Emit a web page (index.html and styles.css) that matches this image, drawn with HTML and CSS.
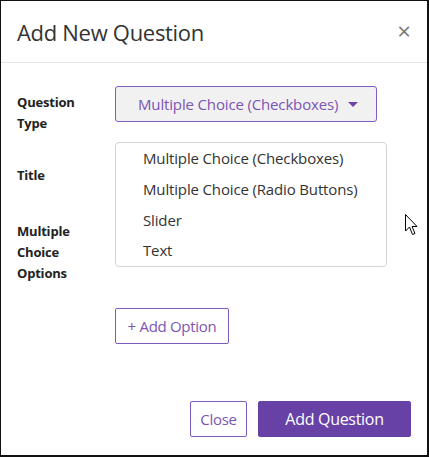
FILE: index.html
```html
<!DOCTYPE html>
<html>
<head>
<meta charset="utf-8">
<link rel="stylesheet" href="styles.css">
</head>
<body>
<div class="modal">
  <div class="modal-header">
    <h1 class="modal-title">Add New Question</h1>
    <span class="close-x">×</span>
  </div>
  <div class="modal-body">
    <div class="row row-type">
      <div class="label">Question<br>Type</div>
      <div class="control select-wrap">
        <div class="select">Multiple Choice (Checkboxes)<span class="caret"></span></div>
        <ul class="menu">
          <li>Multiple Choice (Checkboxes)</li>
          <li>Multiple Choice (Radio Buttons)</li>
          <li>Slider</li>
          <li>Text</li>
        </ul>
      </div>
    </div>
    <div class="row row-title">
      <div class="label label-title">Title</div>
      <div class="control"><div class="input"></div></div>
    </div>
    <div class="row">
      <div class="label label-opts">Multiple<br>Choice<br>Options</div>
      <div class="control">
        <div class="options-list"></div>
        <button class="btn btn-outline">+ Add Option</button>
      </div>
    </div>
  </div>
  <div class="modal-footer">
    <button class="btn btn-outline">Close</button>
    <button class="btn btn-primary">Add Question</button>
  </div>
  <svg class="cursor" width="13" height="22" viewBox="0 0 13 22"><path d="M0.5 0.5 L0.5 17 L4.5 13 L7.5 20.5 L10 19.5 L7 12.5 L12 12.5 Z" fill="#fff" stroke="#000" stroke-width="1"/></svg>
</div>
</body>
</html>
```
FILE: styles.css
```css
* { box-sizing: border-box; }
html, body { margin: 0; padding: 0; background: #fff; }
body { font-family: "Open Sans", "Noto Sans", sans-serif; color: #333; }
.modal {
  position: relative;
  width: 429px;
  height: 457px;
  border: 1px solid #111;
  border-right-width: 2px;
  border-bottom-width: 2px;
  display: flex;
  flex-direction: column;
}
.modal-header {
  height: 62px;
  border-bottom: 1px solid #e5e5e5;
  display: flex;
  align-items: center;
  justify-content: space-between;
  padding: 0 16px 0 16px;
}
.modal-title {
  margin: 0;
  font-size: 22px;
  font-weight: 400;
  color: #333;
  letter-spacing: -0.3px;
}
.close-x {
  font-size: 24px;
  color: #7a7a7a;
  line-height: 1;
  margin-top: -2px;
}
.modal-body {
  padding: 23px 16px 0 16px;
  flex: 1;
  display: flex;
  flex-direction: column;
}
.row {
  display: grid;
  grid-template-columns: 98px 1fr;
}
.row-type { height: 36px; margin-bottom: 35px; }
.row-title { height: 36px; margin-bottom: 20px; }
.label {
  font-size: 13px;
  font-weight: 700;
  line-height: 21px;
  color: #222;
  padding-top: 6px;
  letter-spacing: -0.2px;
}
.label-title { padding-top: 8px; }
.label-opts { padding-top: 8px; }
.select-wrap { position: relative; }
.select {
  width: 262px;
  height: 36px;
  border: 1px solid #7d5cbf;
  border-radius: 3px;
  background: #f1f1f1;
  color: #7b55b5;
  font-size: 15px;
  display: flex;
  align-items: center;
  padding-left: 22px;
  letter-spacing: -0.15px;
}
.caret {
  display: inline-block;
  width: 0; height: 0;
  border-left: 5px solid transparent;
  border-right: 5px solid transparent;
  border-top: 5px solid #6a44a8;
  margin-left: 10px;
  margin-top: 1px;
}
.menu {
  position: absolute;
  top: 56px;
  left: 0;
  width: 272px;
  margin: 0;
  padding: 0;
  list-style: none;
  background: #fff;
  border: 1px solid #d4d4d4;
  border-radius: 4px;
  z-index: 5;
}
.menu li {
  height: 30.75px;
  line-height: 30px;
  padding-left: 27px;
  font-size: 15px;
  color: #333;
  letter-spacing: -0.15px;
}
.input { width: 262px; height: 36px; }
.options-list { height: 95px; }
.btn {
  font-family: inherit;
  height: 36px;
  border-radius: 2px;
  font-size: 15px;
  padding: 0 10px;
  cursor: pointer;
  letter-spacing: -0.3px;
}
.btn-outline {
  background: #fff;
  border: 1px solid #7d5cbf;
  color: #7b55b5;
}
.modal-body .btn-outline { width: 114px; }
.modal-footer {
  display: flex;
  justify-content: flex-end;
  gap: 11px;
  padding: 0 16px 18px 0;
}
.modal-footer .btn-outline { width: 57px; padding: 0; }
.btn-primary {
  width: 153px;
  background: #6841a6;
  border: 1px solid #6841a6;
  color: #fff;
  font-size: 16px;
}
.cursor {
  position: absolute;
  left: 404px;
  top: 213px;
}
```
